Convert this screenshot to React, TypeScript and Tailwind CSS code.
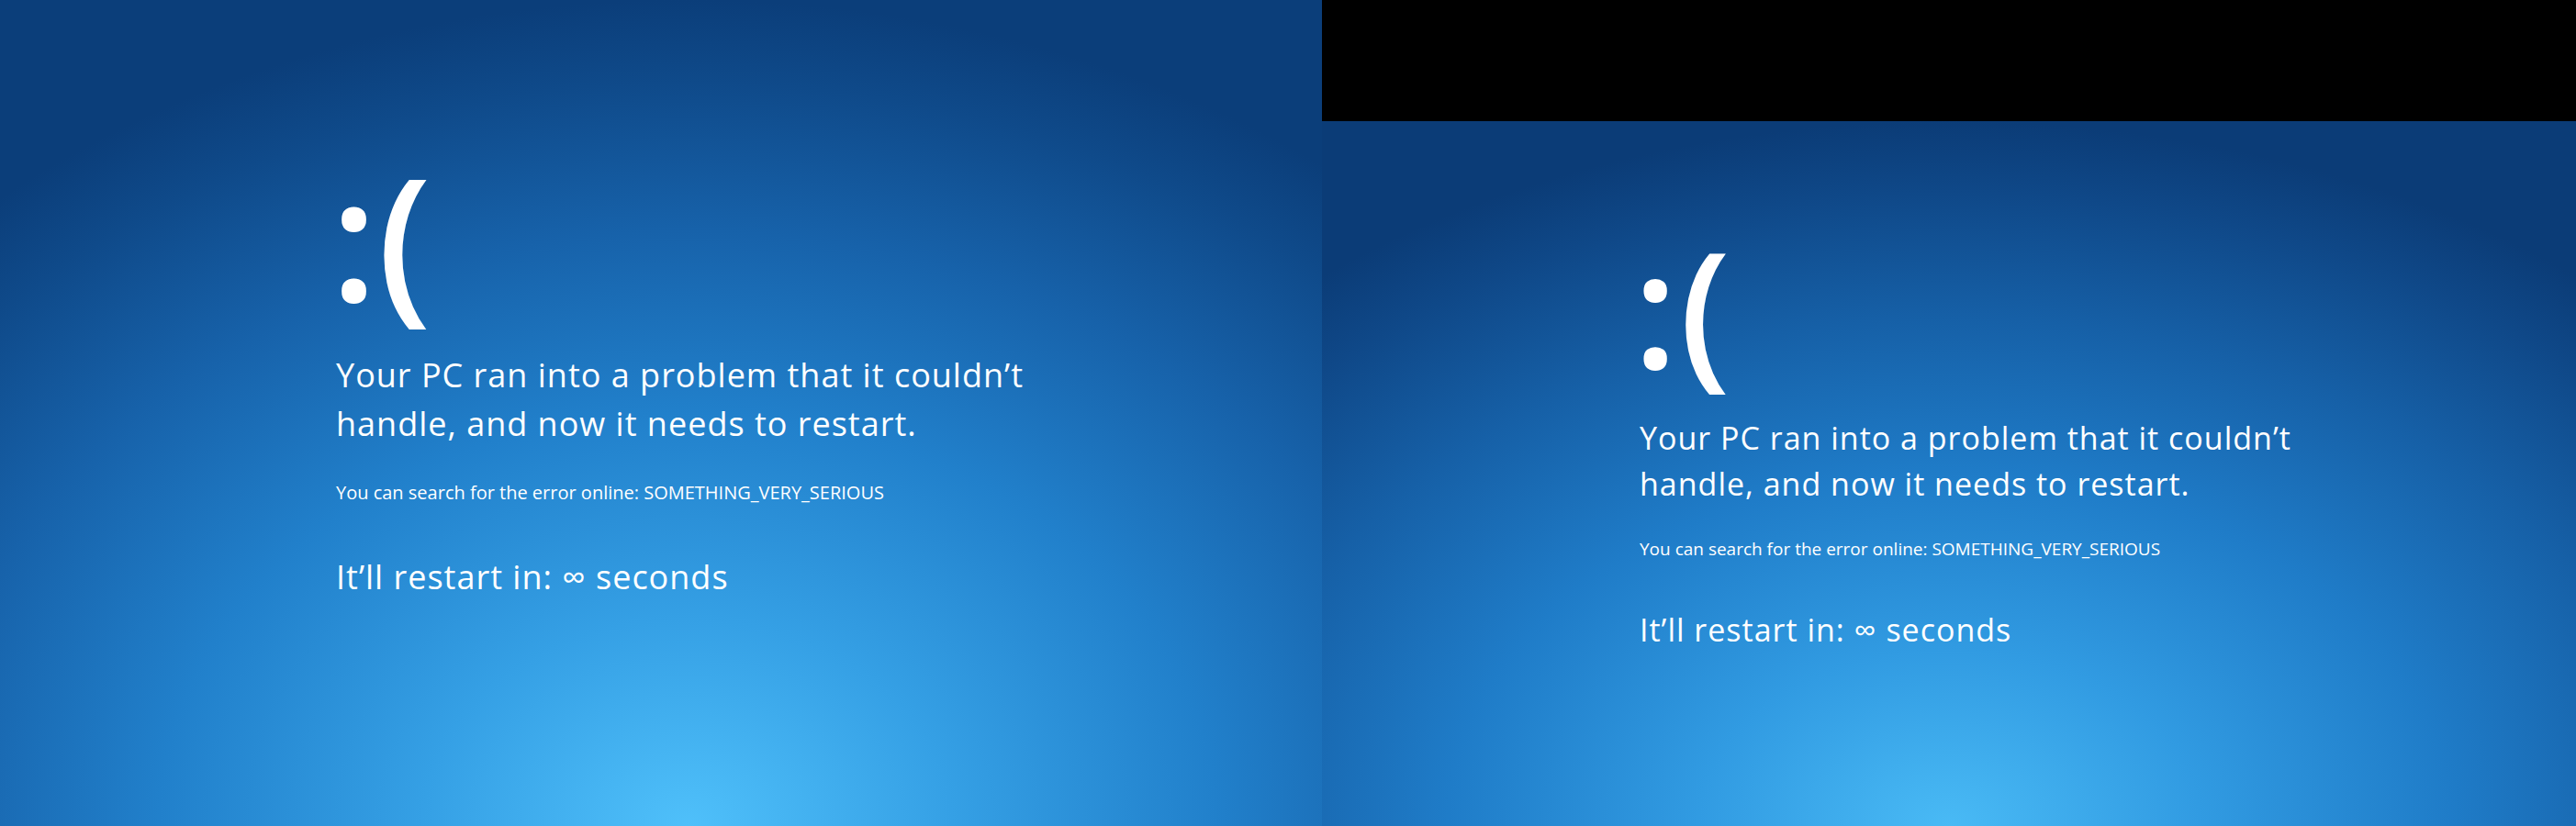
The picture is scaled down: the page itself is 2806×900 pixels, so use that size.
import React from "react";

const font = { fontFamily: '"Open Sans", "Noto Sans", sans-serif' };

function Sad({ size }: { size: "lg" | "sm" }) {
  const lg = size === "lg";
  return (
    <div
      className={
        lg
          ? "text-white pt-[164px] pl-[366px] flex flex-col items-start"
          : "text-white pt-[114px] pl-[346px] flex flex-col items-start"
      }
      style={font}
    >
      <div className={lg ? "flex text-[186px] leading-none font-semibold" : "flex text-[176px] leading-none font-semibold"}>
        <span className={lg ? "-ml-[6px]" : "-ml-[7px]"}>:</span>
        <span className={lg ? "ml-0" : "ml-[2px]"}>(</span>
      </div>
      <p className={lg ? "mt-[32px] text-[36px] leading-[53px] tracking-[1px]" : "mt-[30px] text-[34px] leading-[50px] tracking-[1px]"}>
        Your PC ran into a problem that it couldn’t
        <br />
        handle, and now it needs to restart.
      </p>
      <p className={lg ? "mt-[35px] text-[20px] leading-[28px]" : "mt-[33px] text-[19px] leading-[27px]"}>
        You can search for the error online: SOMETHING_VERY_SERIOUS
      </p>
      <p className={lg ? "mt-[52px] text-[36px] leading-[51px] tracking-[1px]" : "mt-[50px] text-[34px] leading-[48px] tracking-[1px]"}>
        It’ll restart in: ∞ seconds
      </p>
    </div>
  );
}

export default function App() {
  return (
    <div className="flex w-[2806px] h-[900px] bg-black overflow-hidden">
      <div className="w-[1440px] h-[900px] shrink-0 bg-[radial-gradient(80%_100%_at_52%_100%,#4fc0fa_0%,#35a0e5_25%,#2180cb_50%,#1762aa_72%,#0f4a8a_90%,#0b3e7a_100%)]">
        <Sad size="lg" />
      </div>
      <div className="w-[1366px] h-[900px] shrink-0 flex flex-col">
        <div className="h-[132px] bg-black" />
        <div className="h-[768px] bg-[radial-gradient(80%_100%_at_50%_100%,#49baf5_0%,#319be2_25%,#1f7cc8_50%,#1660a7_72%,#0f4888_90%,#0b3c77_100%)]">
          <Sad size="sm" />
        </div>
      </div>
    </div>
  );
}
